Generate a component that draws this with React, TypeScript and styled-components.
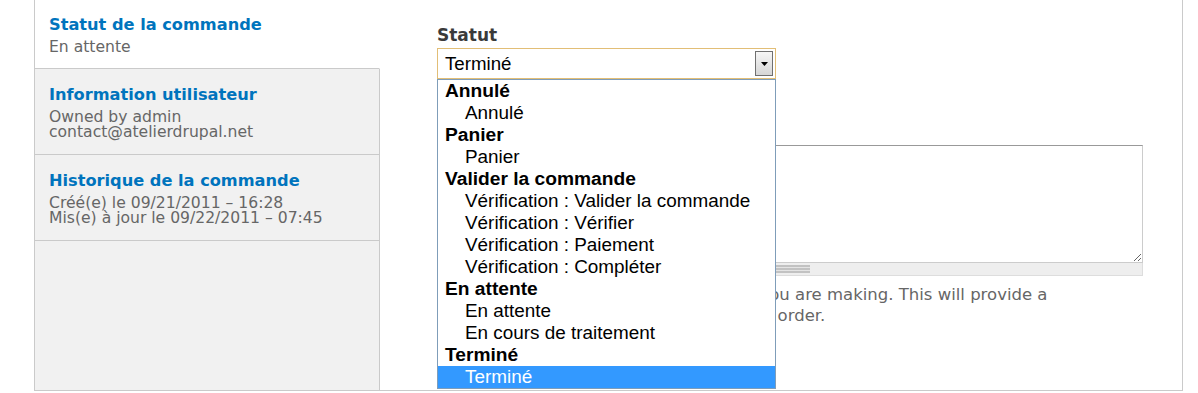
import React from "react";
import styled, { createGlobalStyle } from "styled-components";

const GlobalStyle = createGlobalStyle`
  html, body {
    margin: 0;
    padding: 0;
    background: #ffffff;
  }
  body {
    font-family: "DejaVu Sans", Verdana, sans-serif;
  }
`;

const Frame = styled.div`
  display: flex;
  box-sizing: border-box;
  width: 1149px;
  height: 392px;
  margin: -1px 0 0 34px;
  border: 1px solid #cacaca;
  border-top: none;
`;

const TabList = styled.ul`
  display: flex;
  flex-direction: column;
  flex: none;
  width: 345px;
  margin: 0;
  padding: 0;
  list-style: none;
`;

const Tab = styled.li<{ $active?: boolean }>`
  box-sizing: border-box;
  padding: 16px 16px ${(p) => (p.$active ? "12px" : "13px")} 14px;
  background: ${(p) => (p.$active ? "#ffffff" : "#f1f1f1")};
  border-bottom: 1px solid #cacaca;
  border-right: 1px solid ${(p) => (p.$active ? "transparent" : "#cacaca")};
`;

const TabFiller = styled.li`
  flex: 1;
  background: #f1f1f1;
  border-right: 1px solid #cacaca;
`;

const TabTitle = styled.a`
  display: block;
  font-size: 16.2px;
  line-height: 20px;
  font-weight: bold;
  color: #0074bd;
  text-decoration: none;
`;

const TabSummary = styled.div`
  margin-top: 5px;
  font-size: 15.6px;
  line-height: 15.5px;
  color: #666666;
`;

const Pane = styled.div`
  flex: 1;
  padding: 26px 0 0 57px;
  background: #ffffff;
`;

const FieldLabel = styled.label`
  display: block;
  font-size: 17px;
  line-height: 20px;
  font-weight: bold;
  color: #3a3a3a;
`;

const SelectWrap = styled.div`
  position: relative;
  width: 339px;
  margin-top: 3px;
`;

const SelectBox = styled.div`
  display: flex;
  align-items: center;
  box-sizing: border-box;
  height: 31px;
  padding-left: 7px;
  border: 1px solid #e2be76;
  background: #ffffff;
  font-family: "Liberation Sans", Arial, sans-serif;
  font-size: 18.7px;
  color: #000000;
`;

const ArrowButton = styled.span`
  display: flex;
  align-items: center;
  justify-content: center;
  box-sizing: border-box;
  width: 18px;
  height: 25px;
  margin-left: auto;
  margin-right: 2px;
  border: 1px solid #707070;
  background: linear-gradient(#f6f6f6, #d6d6d6);
`;

const OptionList = styled.ul`
  position: absolute;
  top: 100%;
  left: 0;
  z-index: 2;
  box-sizing: border-box;
  width: 339px;
  margin: 0;
  padding: 0;
  list-style: none;
  border: 1px solid #7f9db9;
  background: #ffffff;
`;

const OptionRow = styled.li<{ $group?: boolean; $selected?: boolean }>`
  height: 22px;
  padding-left: ${(p) => (p.$group ? "7px" : "27px")};
  font-family: "Liberation Sans", Arial, sans-serif;
  font-size: ${(p) => (p.$group ? "19.2px" : "18.9px")};
  line-height: 22px;
  font-weight: ${(p) => (p.$group ? "bold" : "normal")};
  white-space: nowrap;
  color: ${(p) => (p.$selected ? "#ffffff" : "#000000")};
  background: ${(p) => (p.$selected ? "#3399ff" : "transparent")};
`;

const LogLabel = styled(FieldLabel)`
  margin-top: 22px;
  margin-bottom: 24px;
`;

const TextArea = styled.textarea`
  display: block;
  box-sizing: border-box;
  width: 706px;
  height: 118px;
  margin: 0;
  padding: 4px;
  border: 1px solid #cccccc;
  border-top-color: #999999;
  resize: vertical;
  background: #ffffff;
  font-family: "DejaVu Sans", Verdana, sans-serif;
  font-size: 15px;
`;

const Grippie = styled.div`
  display: flex;
  justify-content: center;
  box-sizing: border-box;
  width: 706px;
  height: 13px;
  border: 1px solid #dddddd;
  border-top: none;
  background: #eeeeee;
`;

const Grip = styled.span`
  width: 40px;
  height: 8px;
  margin-top: 2px;
  background: repeating-linear-gradient(
    to bottom,
    #c2c2c2 0px,
    #c2c2c2 2px,
    #e4e4e4 2px,
    #e4e4e4 3px
  );
`;

const Description = styled.div`
  max-width: 660px;
  margin-top: 8px;
  font-size: 16.5px;
  line-height: 21px;
  color: #666666;
`;

type Opt = { label: string; group?: boolean; selected?: boolean };

const options: Opt[] = [
  { label: "Annulé", group: true },
  { label: "Annulé" },
  { label: "Panier", group: true },
  { label: "Panier" },
  { label: "Valider la commande", group: true },
  { label: "Vérification : Valider la commande" },
  { label: "Vérification : Vérifier" },
  { label: "Vérification : Paiement" },
  { label: "Vérification : Compléter" },
  { label: "En attente", group: true },
  { label: "En attente" },
  { label: "En cours de traitement" },
  { label: "Terminé", group: true },
  { label: "Terminé", selected: true },
];

const tabs = [
  { title: "Statut de la commande", lines: ["En attente"], active: true },
  {
    title: "Information utilisateur",
    lines: ["Owned by admin", "contact@atelierdrupal.net"],
  },
  {
    title: "Historique de la commande",
    lines: ["Créé(e) le 09/21/2011 – 16:28", "Mis(e) à jour le 09/22/2011 – 07:45"],
  },
];

export default function App() {
  return (
    <>
      <GlobalStyle />
      <Frame>
        <TabList>
          {tabs.map((t) => (
            <Tab key={t.title} $active={t.active}>
              <TabTitle href="#">{t.title}</TabTitle>
              <TabSummary>
                {t.lines.map((l) => (
                  <div key={l}>{l}</div>
                ))}
              </TabSummary>
            </Tab>
          ))}
          <TabFiller />
        </TabList>
        <Pane>
          <FieldLabel>Statut</FieldLabel>
          <SelectWrap>
            <SelectBox>
              Terminé
              <ArrowButton>
                <svg width="7" height="4" viewBox="0 0 7 4">
                  <path d="M0 0H7L3.5 4Z" fill="#000" />
                </svg>
              </ArrowButton>
            </SelectBox>
            <OptionList>
              {options.map((o, i) => (
                <OptionRow key={i} $group={o.group} $selected={o.selected}>
                  {o.label}
                </OptionRow>
              ))}
            </OptionList>
          </SelectWrap>
          <LogLabel>Update log message</LogLabel>
          <TextArea />
          <Grippie>
            <Grip />
          </Grippie>
          <Description>
            Provide an explanation of the changes you are making. This will provide a
            meaningful audit trail for updates to this order.
          </Description>
        </Pane>
      </Frame>
    </>
  );
}
